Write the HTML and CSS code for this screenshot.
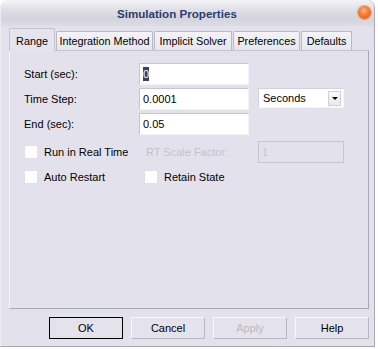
FILE: index.html
```html
<!DOCTYPE html>
<html lang="en">
<head>
  <meta charset="UTF-8" />
  <title>Simulation Properties</title>
  <link rel="stylesheet" href="styles.css">
</head>
<body>

  <div class="window">
    <!-- Title bar -->
    <div class="titlebar">
      <span class="title">Simulation Properties</span>
      <span class="close"></span>
    </div>

    <!-- Tabs -->
    <div class="tabs">
      <div class="tab active t-range">Range</div>
      <div class="tab t-integ">Integration Method</div>
      <div class="tab t-impl">Implicit Solver</div>
      <div class="tab t-pref">Preferences</div>
      <div class="tab t-def">Defaults</div>
    </div>

    <!-- Range page -->
    <div class="panel">
      <div class="row">
        <span class="label">Start (sec):</span>
        <div class="field"><span class="sel">0</span></div>
      </div>
      <div class="row">
        <span class="label">Time Step:</span>
        <div class="field">0.0001</div>
        <div class="select">
          <span>Seconds</span>
          <span class="drop"></span>
        </div>
      </div>
      <div class="row">
        <span class="label">End (sec):</span>
        <div class="field">0.05</div>
      </div>

      <div class="row checks first">
        <label class="check"><span class="box"></span>Run in Real Time</label>
        <span class="disabled-text">RT Scale Factor:</span>
        <div class="field disabled">1</div>
      </div>
      <div class="row checks">
        <label class="check"><span class="box"></span>Auto Restart</label>
        <label class="check"><span class="box"></span>Retain State</label>
      </div>
    </div>

    <!-- Dialog buttons -->
    <div class="buttons">
      <button class="default">OK</button>
      <button>Cancel</button>
      <button class="off">Apply</button>
      <button>Help</button>
    </div>
  </div>

</body>
</html>
```

FILE: styles.css
```css
body {
  margin: 0;
  background: #fff;
  font-family: "Liberation Sans", Arial, sans-serif;
  font-size: 11px;
  color: #000;
}
.window {
  width: 375px;
  height: 347px;
  box-sizing: border-box;
  background: #e3e2ec;
  border-radius: 8px 8px 0 0;
  border-left: 1px solid #ececf2;
  border-right: 1px solid #a9a9b6;
  border-bottom: 1px solid #a9a9b6;
}
.titlebar {
  height: 26px;
  border-radius: 8px 8px 0 0;
  background: linear-gradient(#f4f4f7 0%, #e2e2e8 30%, #d4d4dd 70%, #dcdce4 100%);
  display: flex;
  align-items: center;
  position: relative;
}
.title {
  margin-left: 116px;
  font-weight: bold;
  font-size: 11.6px;
  color: #2d3c72;
}
.close {
  position: absolute;
  left: 357px;
  top: 6px;
  width: 13px;
  height: 13px;
  border-radius: 50%;
  background: radial-gradient(circle at 45% 35%, #ffb57a 0%, #f5792e 45%, #d9531a 100%);
  box-shadow: 0 0 0 1px #e9a07a;
}
.tabs {
  display: flex;
  align-items: flex-end;
  margin: 2px 0 -1px 8px;
  height: 23px;
  position: relative;
  z-index: 1;
}
.tab {
  box-sizing: border-box;
  height: 19px;
  margin: 0 1px 1px 0;
  border: 1px solid #b8b8c6;
  border-bottom: none;
  border-radius: 2px 2px 0 0;
  background: linear-gradient(#f4f4f7, #e6e6ee);
  text-align: center;
  line-height: 18px;
  font-size: 10.8px;
}
.tab.active {
  height: 23px;
  margin-bottom: 0;
  background: #e5e4ee;
  border-color: #c4c4d0;
  line-height: 24px;
}
.t-range { width: 46px; }
.t-integ { width: 97px; }
.t-impl { width: 78px; }
.t-pref { width: 67px; }
.t-def { width: 51px; }
.panel {
  box-sizing: border-box;
  width: 360px;
  height: 259px;
  margin-left: 8px;
  padding: 12px 0 0 14px;
  border: 1px solid #a6a6b4;
  border-top-color: #c4c4d0;
  border-left-color: #f6f6fa;
  display: flex;
  flex-direction: column;
  gap: 3px;
}
.row {
  display: grid;
  grid-template-columns: 115px 110px 95px;
  align-items: start;
  height: 22px;
}
.row .label {
  line-height: 22px;
}
.field {
  box-sizing: border-box;
  height: 22px;
  background: #fff;
  border: 1px solid;
  border-color: #c6c6d2 #f4f4f8 #f4f4f8 #c6c6d2;
  padding-left: 3px;
  line-height: 20px;
}
.sel {
  background: #34426f;
  color: #fff;
  padding: 1px 0;
}
.select {
  box-sizing: border-box;
  height: 20px;
  margin-left: 9px;
  background: #fff;
  border: 1px solid;
  border-color: #d2d2dc #f4f4f8 #f4f4f8 #d2d2dc;
  display: flex;
  align-items: center;
  justify-content: space-between;
  padding: 0 2px 0 4px;
}
.drop {
  width: 13px;
  height: 15px;
  box-sizing: border-box;
  border: 1px solid #d0d0da;
  background: linear-gradient(#fafafc, #e8e8ee);
  position: relative;
}
.drop::after {
  content: "";
  position: absolute;
  left: 3px;
  top: 5px;
  border-left: 3px solid transparent;
  border-right: 3px solid transparent;
  border-top: 3px solid #000;
}
.checks {
  grid-template-columns: 120px 114px 86px;
  align-items: center;
}
.checks.first {
  margin-top: 3px;
}
.check {
  display: flex;
  align-items: center;
  gap: 6px;
}
.box {
  width: 12px;
  height: 12px;
  background: #fff;
  border: 1px solid #e0e0ea;
}
.disabled-text {
  padding-left: 2px;
  color: #c2c2cc;
}
.field.disabled {
  background: #e3e2ec;
  border: 1px solid #c6c6d2;
  color: #c2c2cc;
}
.buttons {
  display: flex;
  justify-content: flex-end;
  gap: 8px;
  margin: 8px 5px 0 0;
}
button {
  width: 74px;
  height: 22px;
  box-sizing: border-box;
  font-family: "Liberation Sans", Arial, sans-serif;
  font-size: 11px;
  color: #000;
  background: #e4e3ec;
  border: 1px solid;
  border-color: #f8f8fb #b6b6c4 #b6b6c4 #f8f8fb;
  padding: 0;
}
button.default {
  border: 1px solid #000;
}
button.off {
  color: #b9b9c3;
}
```
